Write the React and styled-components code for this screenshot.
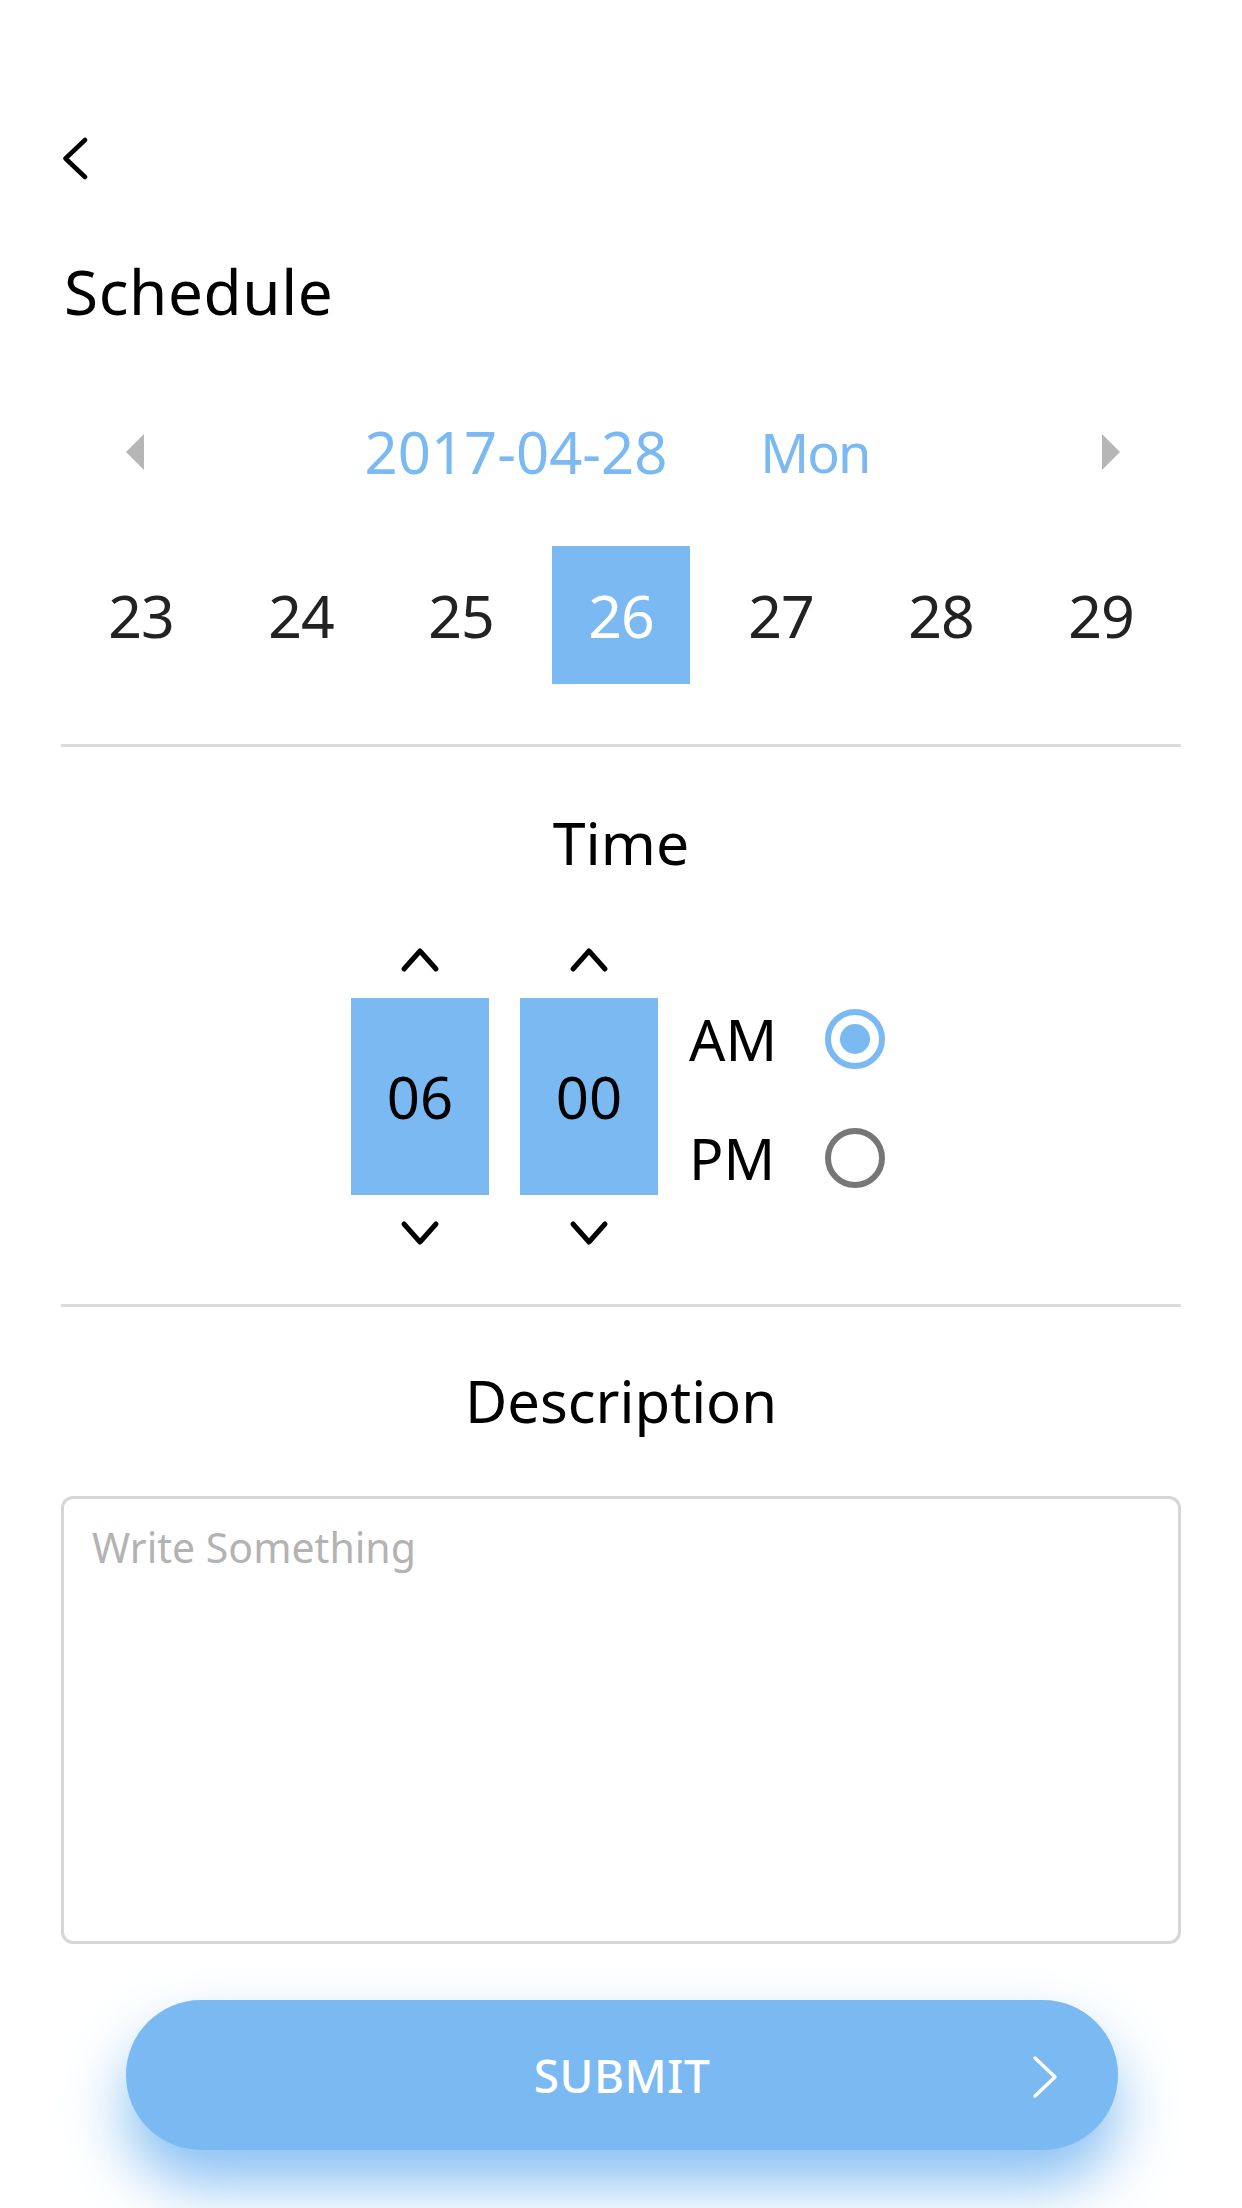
import React, { useState } from 'react';
import styled, { createGlobalStyle } from 'styled-components';

const BLUE = '#7bb9f2';

const GlobalStyle = createGlobalStyle`
  html, body {
    margin: 0;
    padding: 0;
    background: #fff;
  }
  body {
    font-family: "Noto Sans", "Open Sans", sans-serif;
    color: #000;
  }
  * {
    box-sizing: border-box;
  }
`;

const Page = styled.div`
  width: 1242px;
  min-height: 2208px;
  padding: 0 61px;
  overflow: hidden;
  display: flex;
  flex-direction: column;
`;

const BackButton = styled.button`
  margin-top: 136px;
  width: 28px;
  height: 44px;
  padding: 0;
  border: none;
  background: none;
  display: flex;
`;

const Title = styled.h1`
  margin: 81px 0 0 3px;
  font-size: 62px;
  line-height: 60px;
  font-weight: 400;
  letter-spacing: 0.6px;
  color: #000;
`;

const DateNav = styled.div`
  margin-top: 101px;
  height: 60px;
  padding: 0 61px 0 65px;
  display: flex;
  align-items: center;
  justify-content: space-between;
`;

const Arrow = styled.span`
  width: 0;
  height: 0;
  border-top: 18px solid transparent;
  border-bottom: 18px solid transparent;
  ${p => (p.dir === 'left'
    ? 'border-right: 18px solid #b6b6b6;'
    : 'border-left: 18px solid #b6b6b6;')}
`;

const DateLabel = styled.div`
  display: flex;
  gap: 93px;
  font-size: 58px;
  line-height: 60px;
  color: ${BLUE};
  margin-right: 12px;

  span + span {
    letter-spacing: -2px;
    font-size: 54px;
  }
`;

const Days = styled.div`
  margin-top: 64px;
  display: grid;
  grid-template-columns: repeat(7, 1fr);
  justify-items: center;
`;

const Day = styled.div`
  width: 138px;
  height: 138px;
  line-height: 138px;
  text-align: center;
  font-size: 59px;
  letter-spacing: -1px;
  color: ${p => (p.active ? '#fff' : '#222')};
  background: ${p => (p.active ? BLUE : 'transparent')};
`;

const Divider = styled.hr`
  margin: ${p => p.top}px 0 0;
  border: none;
  height: 3px;
  background: #dcdcdc;
`;

const SectionTitle = styled.h2`
  margin: ${p => p.top}px 0 0;
  font-size: ${p => p.size || 58}px;
  line-height: 60px;
  font-weight: 400;
  text-align: center;
  color: #000;
`;

const Picker = styled.div`
  margin-top: 74px;
  display: flex;
  justify-content: center;
  align-items: center;
  gap: 31px;
  padding-right: 6px;
`;

const Spinner = styled.div`
  width: 138px;
  display: flex;
  flex-direction: column;
  align-items: center;
`;

const StepButton = styled.button`
  width: 46px;
  height: 28px;
  padding: 0;
  border: none;
  background: none;
  display: flex;
  justify-content: center;
  align-items: center;
`;

const Value = styled.div`
  width: 138px;
  height: 197px;
  margin: 24px 0;
  background: ${BLUE};
  font-size: 58px;
  line-height: 197px;
  text-align: center;
  color: #000;
`;

const Meridiem = styled.div`
  width: 196px;
  display: flex;
  flex-direction: column;
  gap: 59px;
  margin-top: 4px;
`;

const MeridiemRow = styled.label`
  height: 60px;
  display: flex;
  align-items: center;
  justify-content: space-between;
  font-size: 57px;
  line-height: 60px;
  color: #000;
`;

const Radio = styled.span`
  width: 60px;
  height: 60px;
  border-radius: 50%;
  border: 6px solid ${p => (p.checked ? BLUE : '#777')};
  display: flex;
  align-items: center;
  justify-content: center;

  &::after {
    content: '';
    width: 30px;
    height: 30px;
    border-radius: 50%;
    background: ${p => (p.checked ? BLUE : 'transparent')};
  }
`;

const TextArea = styled.textarea`
  margin-top: 65px;
  width: 100%;
  height: 448px;
  border: 3px solid #d6d6d6;
  border-radius: 12px;
  padding: 20px 28px;
  resize: none;
  outline: none;
  font-family: "Noto Sans", "Open Sans", sans-serif;
  font-size: 41px;
  line-height: 1.4;
  color: #333;

  &::placeholder {
    color: #b3b3b3;
  }
`;

const SubmitButton = styled.button`
  position: relative;
  margin: 56px 63px 0 65px;
  height: 150px;
  border: none;
  border-radius: 75px;
  background: ${BLUE};
  box-shadow: 0 34px 60px rgba(123, 185, 242, 0.9);
  color: #fff;
  font-family: "Noto Sans", "Open Sans", sans-serif;
  font-size: 46px;
  font-weight: 500;
  letter-spacing: 0.5px;
  cursor: pointer;

  svg {
    position: absolute;
    right: 57px;
    top: 55px;
  }
`;

const Chevron = ({ dir }) => {
  const paths = {
    up: 'M5 22 L21 4 L37 22',
    down: 'M5 4 L21 22 L37 4',
  };
  return (
    <svg width="42" height="26" viewBox="0 0 42 26" fill="none">
      <path d={paths[dir]} stroke="#000" strokeWidth="5" strokeLinecap="round" strokeLinejoin="round" />
    </svg>
  );
};

const TimeSpinner = ({ value }) => (
  <Spinner>
    <StepButton aria-label="increase">
      <Chevron dir="up" />
    </StepButton>
    <Value>{value}</Value>
    <StepButton aria-label="decrease">
      <Chevron dir="down" />
    </StepButton>
  </Spinner>
);

export default function App() {
  const [meridiem, setMeridiem] = useState('AM');
  const days = [23, 24, 25, 26, 27, 28, 29];

  return (
    <>
      <GlobalStyle />
      <Page>
        <BackButton aria-label="back">
          <svg width="28" height="44" viewBox="0 0 28 44" fill="none">
            <path d="M24 4 L4.5 22.5 L24 41" stroke="#000" strokeWidth="4.5" strokeLinecap="round" strokeLinejoin="round" />
          </svg>
        </BackButton>

        <Title>Schedule</Title>

        <DateNav>
          <Arrow dir="left" />
          <DateLabel>
            <span>2017-04-28</span>
            <span>Mon</span>
          </DateLabel>
          <Arrow dir="right" />
        </DateNav>

        <Days>
          {days.map(d => (
            <Day key={d} active={d === 26}>{d}</Day>
          ))}
        </Days>

        <Divider top={60} />

        <SectionTitle top={65} size={59}>Time</SectionTitle>

        <Picker>
          <TimeSpinner value="06" />
          <TimeSpinner value="00" />
          <Meridiem>
            {['AM', 'PM'].map(m => (
              <MeridiemRow key={m} onClick={() => setMeridiem(m)}>
                {m}
                <Radio checked={meridiem === m} />
              </MeridiemRow>
            ))}
          </Meridiem>
        </Picker>

        <Divider top={57} />

        <SectionTitle top={64}>Description</SectionTitle>

        <TextArea placeholder="Write Something" />

        <SubmitButton>
          SUBMIT
          <svg width="30" height="44" viewBox="0 0 30 44" fill="none">
            <path d="M4 3 L24 22 L4 41" stroke="#fff" strokeWidth="3.5" strokeLinecap="round" strokeLinejoin="round" />
          </svg>
        </SubmitButton>
      </Page>
    </>
  );
}
